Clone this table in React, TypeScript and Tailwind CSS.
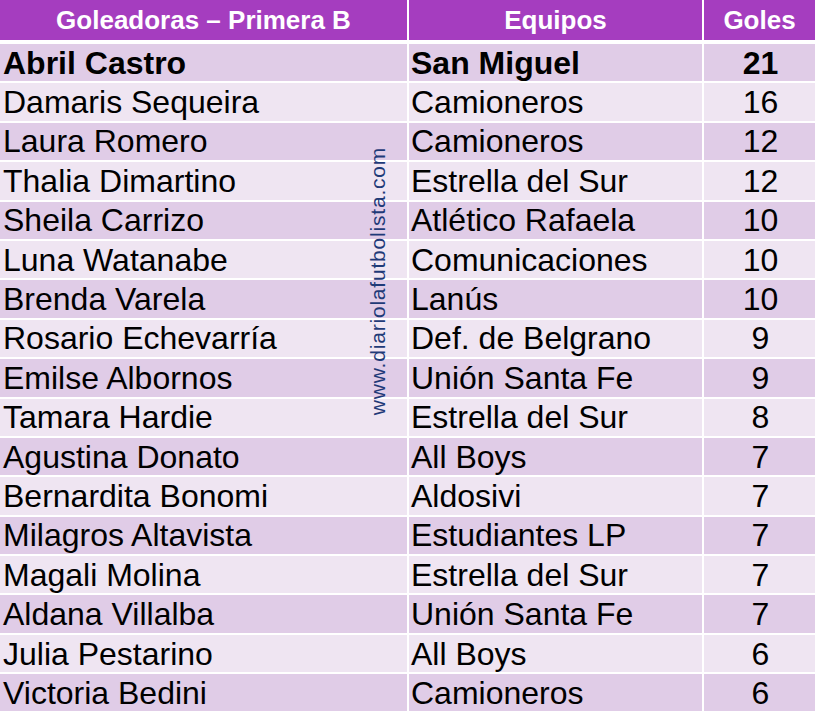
import React from "react";

type Row = { name: string; team: string; goals: number };

const rows: Row[] = [
  { name: "Abril Castro", team: "San Miguel", goals: 21 },
  { name: "Damaris Sequeira", team: "Camioneros", goals: 16 },
  { name: "Laura Romero", team: "Camioneros", goals: 12 },
  { name: "Thalia Dimartino", team: "Estrella del Sur", goals: 12 },
  { name: "Sheila Carrizo", team: "Atlético Rafaela", goals: 10 },
  { name: "Luna Watanabe", team: "Comunicaciones", goals: 10 },
  { name: "Brenda Varela", team: "Lanús", goals: 10 },
  { name: "Rosario Echevarría", team: "Def. de Belgrano", goals: 9 },
  { name: "Emilse Albornos", team: "Unión Santa Fe", goals: 9 },
  { name: "Tamara Hardie", team: "Estrella del Sur", goals: 8 },
  { name: "Agustina Donato", team: "All Boys", goals: 7 },
  { name: "Bernardita Bonomi", team: "Aldosivi", goals: 7 },
  { name: "Milagros Altavista", team: "Estudiantes LP", goals: 7 },
  { name: "Magali Molina", team: "Estrella del Sur", goals: 7 },
  { name: "Aldana Villalba", team: "Unión Santa Fe", goals: 7 },
  { name: "Julia Pestarino", team: "All Boys", goals: 6 },
  { name: "Victoria Bedini", team: "Camioneros", goals: 6 },
];

export default function App() {
  return (
    <div className="relative h-[711px] w-[815px] overflow-hidden bg-white font-['Liberation_Sans',Arial,sans-serif] text-black">
      {/* header */}
      <div className="flex h-[40px] gap-[2px] text-[26px] font-bold leading-none text-white">
        <div className="flex w-[407px] items-center justify-center bg-[#a53dbf]">Goleadoras – Primera B</div>
        <div className="flex w-[293px] items-center justify-center bg-[#a53dbf]">Equipos</div>
        <div className="flex flex-1 items-center justify-center bg-[#a53dbf]">Goles</div>
      </div>

      <div className="mt-[4px] flex flex-col gap-[2px]">
        {rows.map((r, i) => {
          const bg = i % 2 === 0 ? "bg-[#e0cce7]" : "bg-[#efe5f2]";
          return (
            <div key={r.name} className={`flex h-[37.4px] gap-[2px] text-[32px] leading-none ${i === 0 ? "font-bold" : ""}`}>
              <div className={`flex w-[407px] items-center pl-[3px] ${bg}`}>{r.name}</div>
              <div className={`flex w-[293px] items-center pl-[2px] ${bg}`}>{r.team}</div>
              <div className={`flex flex-1 items-center justify-center pl-[2px] ${bg}`}>{r.goals}</div>
            </div>
          );
        })}
      </div>

      {/* watermark */}
      <div className="absolute left-[377px] top-[281px] -translate-x-1/2 -translate-y-1/2 -rotate-90 whitespace-nowrap text-[21px] leading-none tracking-[0.8px] text-[#1f3a78]">
        www.diariolafutbolista.com
      </div>
    </div>
  );
}
